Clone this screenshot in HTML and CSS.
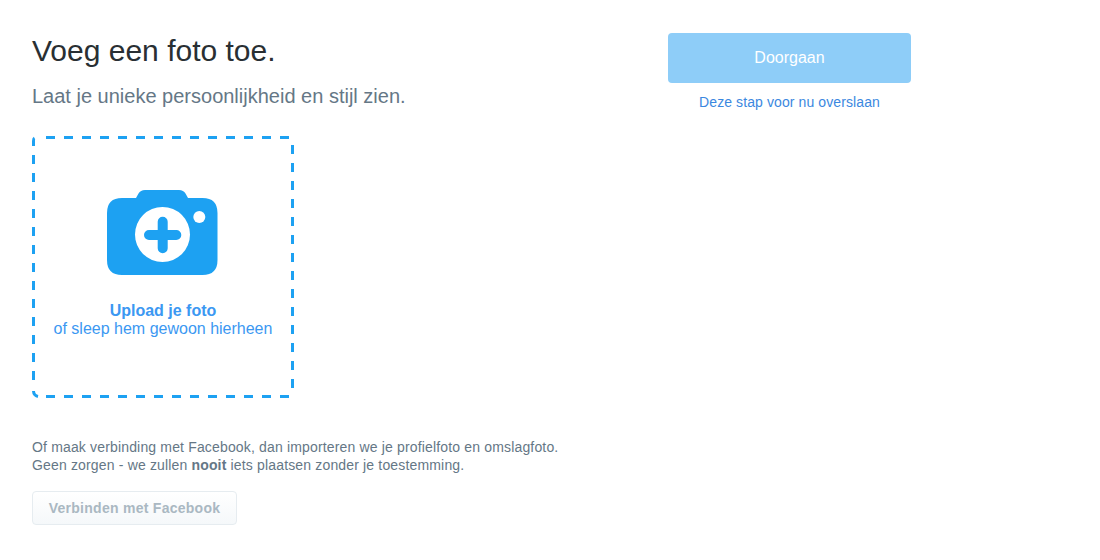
FILE: index.html
```html
<!DOCTYPE html>
<html lang="nl">
<head>
<meta charset="utf-8">
<title>Voeg een foto toe</title>
<link rel="stylesheet" href="styles.css">
</head>
<body>
<main class="page">
  <section class="main">
    <h1 class="title">Voeg een foto toe.</h1>
    <p class="subtitle">Laat je unieke persoonlijkheid en stijl zien.</p>
    <div class="drop">
      <svg class="dashes" width="262" height="262" viewBox="0 0 262 262" aria-hidden="true">
        <g fill="none" stroke="#1da1f2" stroke-width="3">
          <path stroke-dasharray="9 9" d="M14 1.500H259"/>
          <path stroke-dasharray="9 9" d="M14 260.500H259"/>
          <path stroke-dasharray="9 9" d="M1.500 19V247"/>
          <path stroke-dasharray="9 9" d="M260.500 9V255"/>
          <path d="M1.500 10V5Q1.500 2.500 2.500 2"/>
          <path d="M1.500 255Q1.700 259.500 6 260.500"/>
        </g>
      </svg>
      <svg class="camera" width="111" height="85" viewBox="0 0 111 85" aria-hidden="true">
        <path fill="#1da1f2" d="M15 8H29L31.500 3.500Q33.500 0 38 0H72Q76.500 0 78.500 3.500L81 8H95.500Q110.500 8 110.500 23V70Q110.500 85 95.500 85H15Q0 85 0 70V23Q0 8 15 8Z"/>
        <circle cx="55.500" cy="44.500" r="27.500" fill="#fff"/>
        <circle cx="92.300" cy="27" r="6" fill="#fff"/>
        <path fill="none" stroke="#1da1f2" stroke-width="10" stroke-linecap="round" d="M42 45H69.300M55.700 31.700V58.300"/>
      </svg>
      <p class="drop-text"><strong class="drop-strong">Upload je foto</strong><br>of sleep hem gewoon hierheen</p>
    </div>
    <p class="note">Of maak verbinding met Facebook, dan importeren we je profielfoto en omslagfoto.<br>Geen zorgen - we zullen <strong>nooit</strong> iets plaatsen zonder je toestemming.</p>
    <button class="fb" type="button">Verbinden met Facebook</button>
  </section>
  <aside class="side">
    <button class="next" type="button">Doorgaan</button>
    <a class="skip" href="#">Deze stap voor nu overslaan</a>
  </aside>
</main>
</body>
</html>
```
FILE: styles.css
```css
* { box-sizing: border-box; }
html, body { margin: 0; background: #fff; }
body { font-family: "Liberation Sans", Arial, sans-serif; color: #292f33; }
.page { display: flex; padding: 33px 0 0 32px; height: 560px; overflow: hidden; }
.main { width: 636px; flex: none; }
.side { width: 243px; flex: none; display: flex; flex-direction: column; align-items: center; }
.title { margin: 0; font-size: 30px; line-height: 36px; font-weight: 400; color: #292f33; }
.subtitle { margin: 13px 0 0; font-size: 20px; line-height: 28px; color: #657786; }
.drop { position: relative; margin-top: 26px; width: 262px; height: 262px; display: flex; flex-direction: column; align-items: center; padding-top: 54px; }
.dashes { position: absolute; top: 0; left: 0; }
.camera { display: block; margin-left: -1px; }
.drop-text { margin: 27px 0 0; font-size: 16px; line-height: 18px; color: #3b98f2; text-align: center; }
.drop-strong { font-weight: 700; }
.note { margin: 40px 0 0; font-size: 14px; line-height: 18px; color: #657786; letter-spacing: .16px; }
.note strong { font-weight: 700; }
.fb { display: block; margin-top: 17px; width: 205px; height: 34px; padding: 0; border: 1px solid #e6ecf0; border-radius: 4px; background: linear-gradient(#fff, #f5f8fa); color: #aab8c2; font: 700 14px/18px "Liberation Sans", Arial, sans-serif; letter-spacing: .27px; }
.next { width: 243px; height: 50px; border: 0; border-radius: 4px; background: #8ecdf8; color: #fff; font: 400 16px/20px "Liberation Sans", Arial, sans-serif; }
.skip { margin-top: 10px; font-size: 14px; line-height: 18px; color: #3b88e0; text-decoration: none; letter-spacing: .1px; }
```
